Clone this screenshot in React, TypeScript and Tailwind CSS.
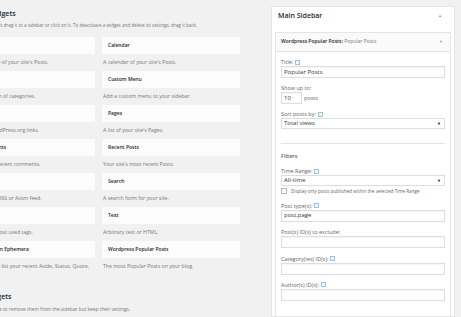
const left = [
  { title: 'Archives', desc: "A monthly archive of your site's Posts." },
  { title: 'Calendar', desc: "A calendar of your site's Posts." },
  { title: 'Categories', desc: 'A list or dropdown of categories.' },
  { title: 'Custom Menu', desc: 'Add a custom menu to your sidebar.' },
  { title: 'Meta', desc: 'Login, RSS, & WordPress.org links.' },
  { title: 'Pages', desc: "A list of your site's Pages." },
  { title: 'Recent Comments', desc: "Your site's most recent comments." },
  { title: 'Recent Posts', desc: "Your site's most recent Posts." },
  { title: 'RSS', desc: 'Entries from any RSS or Atom feed.' },
  { title: 'Search', desc: 'A search form for your site.' },
  { title: 'Tag Cloud', desc: 'A cloud of your most used tags.' },
  { title: 'Text', desc: 'Arbitrary text or HTML.' },
  { title: 'Twenty Fourteen Ephemera', desc: 'Use this widget to list your recent Aside, Status, Quote, and Link posts.' },
  { title: 'Wordpress Popular Posts', desc: 'The most Popular Posts on your blog.' },
];

function Help() {
  return (
    <span className="ml-[2px] inline-block h-[5px] w-[5px] border border-[#9cc3e6] bg-[#f3f8fd] align-middle" />
  );
}

function Label({ children, help }: { children: React.ReactNode; help?: boolean }) {
  return (
    <div className="flex h-[8px] items-center text-[5.5px] leading-[8px] text-[#666]">
      {children}
      {help && <Help />}
    </div>
  );
}

function Input({ value }: { value?: string }) {
  return (
    <div className="flex h-[12px] items-center border border-[#ddd] bg-white px-[2px] text-[6px] text-[#32373c] shadow-[inset_0_1px_1px_rgba(0,0,0,0.04)]">
      {value}
    </div>
  );
}

function Select({ value }: { value: string }) {
  return (
    <div className="flex h-[11px] items-center justify-between border border-[#ddd] bg-white px-[2px] text-[6px] text-[#32373c]">
      <span>{value}</span>
      <span className="pr-[1px] text-[4px] text-black">▼</span>
    </div>
  );
}

export default function App() {
  return (
    <div
      className="flex h-[317px] w-[461px] overflow-hidden bg-[#f1f1f1]"
      style={{ fontFamily: '"Open Sans", "Liberation Sans", sans-serif' }}
    >
      {/* Available widgets */}
      <div className="ml-[-44px] w-[284px] shrink-0 pt-[9px]">
        <h2 className="text-[7px] font-semibold leading-[10px] text-[#23282d]">Available Widgets</h2>
        <p className="mt-[2px] whitespace-nowrap pl-[4px] text-[4.6px] leading-[8px] text-[#72777c]">
          To activate a widget drag it to a sidebar or click on it. To deactivate a widget and delete its settings, drag it back.
        </p>
        <div className="mt-[8px] grid grid-cols-[139px_138px] gap-x-[7px]">
          {left.map((w) => (
            <div key={w.title} className="h-[34px]">
              <div className="flex h-[17px] items-center bg-[#fcfcfc] px-[6px] text-[5px] font-semibold text-[#23282d]">
                {w.title}
              </div>
              <p className="pl-[1px] pt-[4px] text-[5.2px] leading-[8px] text-[#72777c]">{w.desc}</p>
            </div>
          ))}
        </div>
        <h2 className="mt-[17px] text-[7px] font-semibold leading-[10px] text-[#23282d]">Inactive Widgets</h2>
        <p className="mt-[3px] whitespace-nowrap pl-[5px] text-[4.8px] leading-[8px] text-[#72777c]">
          Drag widgets here to remove them from the sidebar but keep their settings.
        </p>
      </div>

      {/* Main sidebar */}
      <div className="ml-[31px] mt-[6px] w-[184px] shrink-0 border border-[#e5e5e5] bg-white px-[3px]">
        <div className="flex h-[18px] items-center justify-between px-[3px]">
          <span className="text-[7px] font-semibold text-[#23282d]">Main Sidebar</span>
          <span className="pr-[6px] text-[4px] text-[#999]">▲</span>
        </div>
        <div className="mt-[7px] border border-[#e5e5e5]">
          <div className="flex h-[18px] items-center justify-between bg-[#fafafa] px-[5px] text-[5px]">
            <span>
              <span className="font-semibold text-[#23282d]">Wordpress Popular Posts:</span>
              <span className="text-[#72777c]"> Popular Posts</span>
            </span>
            <span className="pr-[2px] text-[4px] text-[#999]">▼</span>
          </div>
          <div className="border-t border-[#e5e5e5] px-[5px] pb-[20px] pt-[6px]">
            <Label help>Title:</Label>
            <Input value="Popular Posts" />
            <div className="mt-[6px]">
              <Label>Show up to:</Label>
            </div>
            <div className="flex items-center">
              <div className="w-[21px]">
                <Input value="10" />
              </div>
              <span className="ml-[2px] text-[5.5px] text-[#666]">posts</span>
            </div>
            <div className="mt-[6px]">
              <Label help>Sort posts by:</Label>
            </div>
            <Select value="Total views" />
            <div className="mt-[14px] border-t border-[#e5e5e5]" />
            <div className="mt-[8px] text-[5.5px] font-semibold leading-[8px] text-[#555d66]">Filters</div>
            <div className="mt-[7px]">
              <Label help>Time Range:</Label>
            </div>
            <Select value="All-time" />
            <div className="mt-[2px] flex items-center">
              <span className="h-[6px] w-[6px] border border-[#b4b9be] bg-white" />
              <span className="ml-[4px] text-[4.6px] text-[#666]">
                Display only posts published within the selected Time Range
              </span>
            </div>
            <div className="mt-[7px]">
              <Label help>Post type(s):</Label>
            </div>
            <Input value="post,page" />
            <div className="mt-[6px]">
              <Label>Post(s) ID(s) to exclude:</Label>
            </div>
            <Input />
            <div className="mt-[7px]">
              <Label help>Category(ies) ID(s):</Label>
            </div>
            <Input />
            <div className="mt-[6px]">
              <Label help>Author(s) ID(s):</Label>
            </div>
            <Input />
            <div className="mt-[16px] border-t border-[#e5e5e5]" />
          </div>
        </div>
      </div>
    </div>
  );
}
